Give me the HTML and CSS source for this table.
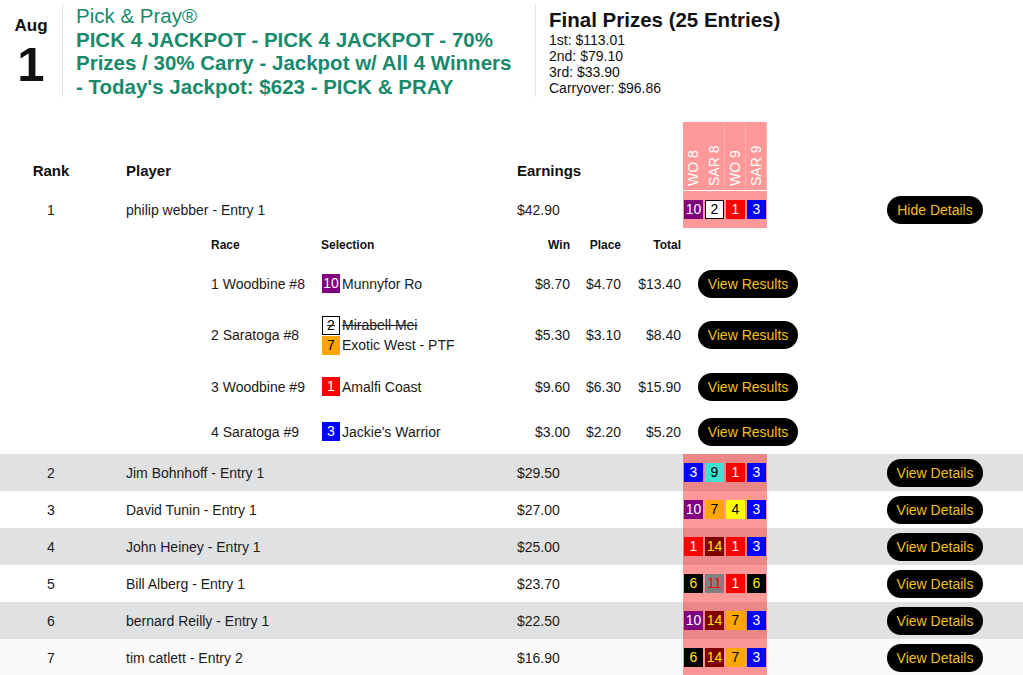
FILE: index.html
```html
<!DOCTYPE html>
<html>
<head>
<meta charset="utf-8">
<link rel="stylesheet" href="styles.css">
</head>
<body>
<header class="top">
  <div class="date">
    <div class="mon">Aug</div>
    <div class="day">1</div>
  </div>
  <div class="title">
    <div class="brand">Pick &amp; Pray®</div>
    <div class="desc">PICK 4 JACKPOT - PICK 4 JACKPOT - 70% Prizes / 30% Carry - Jackpot w/ All 4 Winners - Today's Jackpot: $623 - PICK &amp; PRAY</div>
  </div>
  <div class="prizes">
    <div class="ptitle">Final Prizes (25 Entries)</div>
    <div class="pline">1st: $113.01</div>
    <div class="pline">2nd: $79.10</div>
    <div class="pline">3rd: $33.90</div>
    <div class="pline">Carryover: $96.86</div>
  </div>
</header>

<div class="board">
  <div class="row head">
    <div class="rank">Rank</div>
    <div class="player">Player</div>
    <div class="earn">Earnings</div>
    <div class="picks legs"><span>WO 8</span><span>SAR 8</span><span>WO 9</span><span>SAR 9</span></div>
    <div class="act"></div>
  </div>

  <div class="row">
    <div class="rank">1</div>
    <div class="player">philip webber - Entry 1</div>
    <div class="earn">$42.90</div>
    <div class="picks"><span class="b c10">10</span><span class="b c2">2</span><span class="b c1">1</span><span class="b c3">3</span></div>
    <div class="act"><span class="btn">Hide Details</span></div>
  </div>

  <div class="details">
    <div class="drow dhead">
      <div>Race</div><div>Selection</div><div class="num">Win</div><div class="num">Place</div><div class="num">Total</div><div></div>
    </div>
    <div class="drow">
      <div>1 Woodbine #8</div>
      <div class="sel"><div class="sl"><span class="b sm c10">10</span>Munnyfor Ro</div></div>
      <div class="num">$8.70</div><div class="num">$4.70</div><div class="num">$13.40</div>
      <div class="dact"><span class="btn wide">View Results</span></div>
    </div>
    <div class="drow multi">
      <div>2 Saratoga #8</div>
      <div class="sel">
        <div class="sl scr"><span class="b sm c2">2</span>Mirabell Mei</div>
        <div class="sl"><span class="b sm c7">7</span>Exotic West - PTF</div>
      </div>
      <div class="num">$5.30</div><div class="num">$3.10</div><div class="num">$8.40</div>
      <div class="dact"><span class="btn wide">View Results</span></div>
    </div>
    <div class="drow">
      <div>3 Woodbine #9</div>
      <div class="sel"><div class="sl"><span class="b sm c1">1</span>Amalfi Coast</div></div>
      <div class="num">$9.60</div><div class="num">$6.30</div><div class="num">$15.90</div>
      <div class="dact"><span class="btn wide">View Results</span></div>
    </div>
    <div class="drow">
      <div>4 Saratoga #9</div>
      <div class="sel"><div class="sl"><span class="b sm c3">3</span>Jackie's Warrior</div></div>
      <div class="num">$3.00</div><div class="num">$2.20</div><div class="num">$5.20</div>
      <div class="dact"><span class="btn wide">View Results</span></div>
    </div>
  </div>

  <div class="row alt">
    <div class="rank">2</div>
    <div class="player">Jim Bohnhoff - Entry 1</div>
    <div class="earn">$29.50</div>
    <div class="picks"><span class="b c3">3</span><span class="b c9">9</span><span class="b c1">1</span><span class="b c3">3</span></div>
    <div class="act"><span class="btn">View Details</span></div>
  </div>
  <div class="row">
    <div class="rank">3</div>
    <div class="player">David Tunin - Entry 1</div>
    <div class="earn">$27.00</div>
    <div class="picks"><span class="b c10">10</span><span class="b c7">7</span><span class="b c4">4</span><span class="b c3">3</span></div>
    <div class="act"><span class="btn">View Details</span></div>
  </div>
  <div class="row alt">
    <div class="rank">4</div>
    <div class="player">John Heiney - Entry 1</div>
    <div class="earn">$25.00</div>
    <div class="picks"><span class="b c1">1</span><span class="b c14">14</span><span class="b c1">1</span><span class="b c3">3</span></div>
    <div class="act"><span class="btn">View Details</span></div>
  </div>
  <div class="row">
    <div class="rank">5</div>
    <div class="player">Bill Alberg - Entry 1</div>
    <div class="earn">$23.70</div>
    <div class="picks"><span class="b c6">6</span><span class="b c11">11</span><span class="b c1">1</span><span class="b c6">6</span></div>
    <div class="act"><span class="btn">View Details</span></div>
  </div>
  <div class="row alt">
    <div class="rank">6</div>
    <div class="player">bernard Reilly - Entry 1</div>
    <div class="earn">$22.50</div>
    <div class="picks"><span class="b c10">10</span><span class="b c14">14</span><span class="b c7">7</span><span class="b c3">3</span></div>
    <div class="act"><span class="btn">View Details</span></div>
  </div>
  <div class="row last">
    <div class="rank">7</div>
    <div class="player">tim catlett - Entry 2</div>
    <div class="earn">$16.90</div>
    <div class="picks"><span class="b c6">6</span><span class="b c14">14</span><span class="b c7">7</span><span class="b c3">3</span></div>
    <div class="act"><span class="btn">View Details</span></div>
  </div>
</div>
</body>
</html>
```

FILE: styles.css
```css
* { box-sizing: border-box; }
html, body { margin: 0; padding: 0; background: #fff; }
body {
  font-family: "Liberation Sans", Arial, Helvetica, sans-serif;
  color: #1a1a1a;
  font-size: 14px;
}

/* header */
.top {
  display: flex;
  align-items: flex-start;
  padding-top: 4px;
  height: 98px;
}
.date {
  width: 63px;
  height: 93px;
  border-right: 1px solid #e3e3e3;
  text-align: center;
  font-weight: bold;
  color: #111;
  padding-top: 12px;
}
.mon { font-size: 17px; line-height: 19.5px; }
.day { font-size: 49px; line-height: 56px; }
.title {
  width: 473px;
  height: 93px;
  border-right: 1px solid #e3e3e3;
  padding: 0 16px 0 13px;
  color: #178a6b;
  font-size: 20.5px;
  line-height: 23.7px;
}
.desc { font-weight: bold; }
.prizes {
  padding: 4px 0 0 13px;
  color: #111;
}
.ptitle { font-size: 20.5px; font-weight: bold; line-height: 24px; }
.pline { font-size: 14px; line-height: 16px; }

/* board */
.board { margin-top: 24px; }
.row {
  display: grid;
  grid-template-columns: 102px 415px 166px 84px 1fr;
  align-items: center;
  height: 37px;
  background: #fff;
}
.row.alt { background: #e0e1e3; }
.row.last { background: #fafafa; }
.rank { text-align: center; }
.player { padding-left: 24px; }
.act { padding-left: 120px; }
.picks {
  align-self: stretch;
  background: rgba(255, 0, 0, 0.4);
  display: grid;
  grid-template-columns: repeat(4, 21px);
  align-items: center;
  justify-items: center;
}
.head {
  height: 68px;
  align-items: end;
  margin-bottom: 1px;
}
.head .rank, .head .player, .head .earn {
  font-size: 15px;
  font-weight: bold;
  line-height: 18px;
  padding-bottom: 10px;
  color: #111;
}
.legs { align-items: end; }
.legs span {
  align-self: stretch;
  width: 21px;
  border-left: 1px solid rgba(255, 255, 255, 0.2);
  writing-mode: vertical-rl;
  transform: rotate(180deg);
  color: #fff;
  font-size: 14px;
  line-height: 21px;
  padding-top: 4px;
  text-align: left;
}
.legs span:first-child { border-left: none; }

/* badges */
.b {
  display: inline-block;
  width: 19px;
  height: 19px;
  line-height: 19px;
  text-align: center;
  font-size: 14px;
  color: #fff;
}
.b.sm { width: 18px; margin-right: 2px; flex: none; }
.c1 { background: #ff0000; color: #fff; }
.c2 { background: #fff; color: #000; border: 1.5px solid #000; line-height: 16px; }
.c3 { background: #0000ff; color: #fff; }
.c4 { background: #ffff00; color: #000; }
.c6 { background: #000; color: #ffeb00; }
.c7 { background: #ffa500; color: #000; }
.c9 { background: #40e0d0; color: #000; }
.c10 { background: #800080; color: #fff; }
.c11 { background: #808080; color: #ff0000; }
.c14 { background: #800000; color: #ffeb00; }

/* buttons */
.btn {
  display: inline-block;
  width: 96px;
  height: 28px;
  line-height: 28px;
  border-radius: 14px;
  background: #000;
  color: #f3bf1c;
  text-align: center;
  font-size: 14px;
}
.btn.wide { width: 100px; }

/* details */
.details { padding-left: 211px; }
.drow {
  display: grid;
  grid-template-columns: 110px 199px 50px 51px 60px 118px;
  align-items: center;
  padding: 8px 0;
  min-height: 45px;
}
.drow.multi { padding: 9px 0; }
.dhead {
  font-size: 12px;
  font-weight: bold;
  min-height: 33px;
  padding: 0;
  color: #111;
}
.num { text-align: right; }
.dact { padding-left: 17px; }
.sel { padding-left: 1px; }
.sl {
  display: flex;
  align-items: center;
  height: 20px;
}
.scr { text-decoration: line-through; }
```
